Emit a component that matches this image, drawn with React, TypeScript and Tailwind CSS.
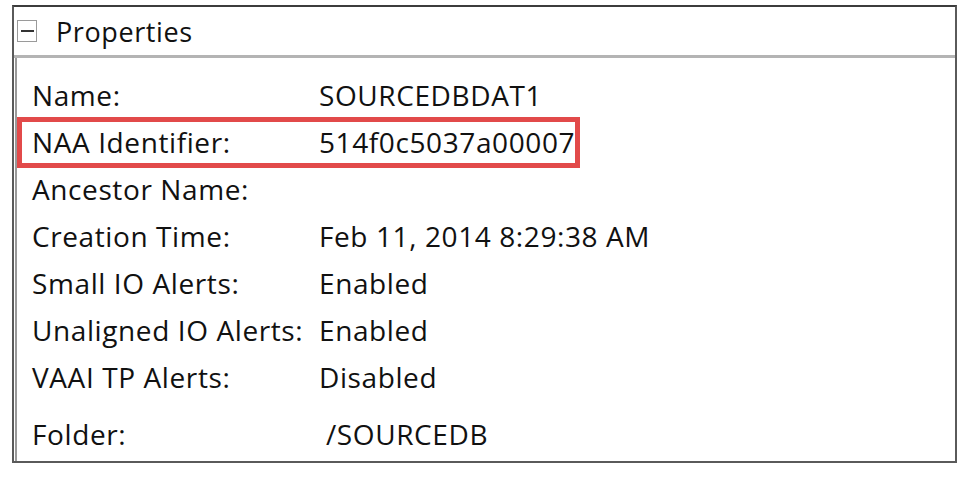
import React from 'react';

type Prop = { label: string; value: string; highlight?: boolean; folder?: boolean };

const props: Prop[] = [
  { label: 'Name:', value: 'SOURCEDBDAT1' },
  { label: 'NAA Identifier:', value: '514f0c5037a00007', highlight: true },
  { label: 'Ancestor Name:', value: '' },
  { label: 'Creation Time:', value: 'Feb 11, 2014 8:29:38 AM' },
  { label: 'Small IO Alerts:', value: 'Enabled' },
  { label: 'Unaligned IO Alerts:', value: 'Enabled' },
  { label: 'VAAI TP Alerts:', value: 'Disabled' },
  { label: 'Folder:', value: '/SOURCEDB', folder: true },
];

export default function App() {
  return (
    <div className="w-[964px] h-[482px] bg-white pt-[5px] pl-[12px]" style={{ fontFamily: '"Open Sans", "DejaVu Sans", sans-serif' }}>
      <div className="w-[945px] h-[458px] border-2 border-[#5a5a5a] border-t-[#3c3c3c] flex flex-col">
        {/* Header */}
        <div className="h-[51px] flex items-center border-b-[3px] border-[#b4b4b4] shrink-0">
          <div className="ml-[3px] w-[20px] h-[22px] border border-[#9a9a9a] flex items-center justify-center">
            <div className="w-[13px] h-[2px] bg-[#333]" />
          </div>
          <span className="ml-[19px] text-[27px] text-[#111] leading-none tracking-[0.6px]">Properties</span>
        </div>

        {/* Body */}
        <div className="flex-1 border-l-2 border-[#9a9a9a] ml-[1px] pt-[13px] pl-[15px] text-[28px] tracking-[0.6px] text-[#111]">
          {props.map(p => (
            <div
              key={p.label}
              className={`relative flex items-center ${p.folder ? 'h-[47px] mt-[10px]' : 'h-[47px]'}`}
            >
              {p.highlight && (
                <div className="absolute left-[-15px] top-[-1px] w-[563px] h-[51px] border-[5px] border-[#e24a4a]" />
              )}
              <span className="w-[287px] shrink-0 whitespace-nowrap">{p.label}</span>
              <span className={`whitespace-nowrap ${p.folder ? 'ml-[7px]' : ''}`}>{p.value}</span>
            </div>
          ))}
        </div>
      </div>
    </div>
  );
}
